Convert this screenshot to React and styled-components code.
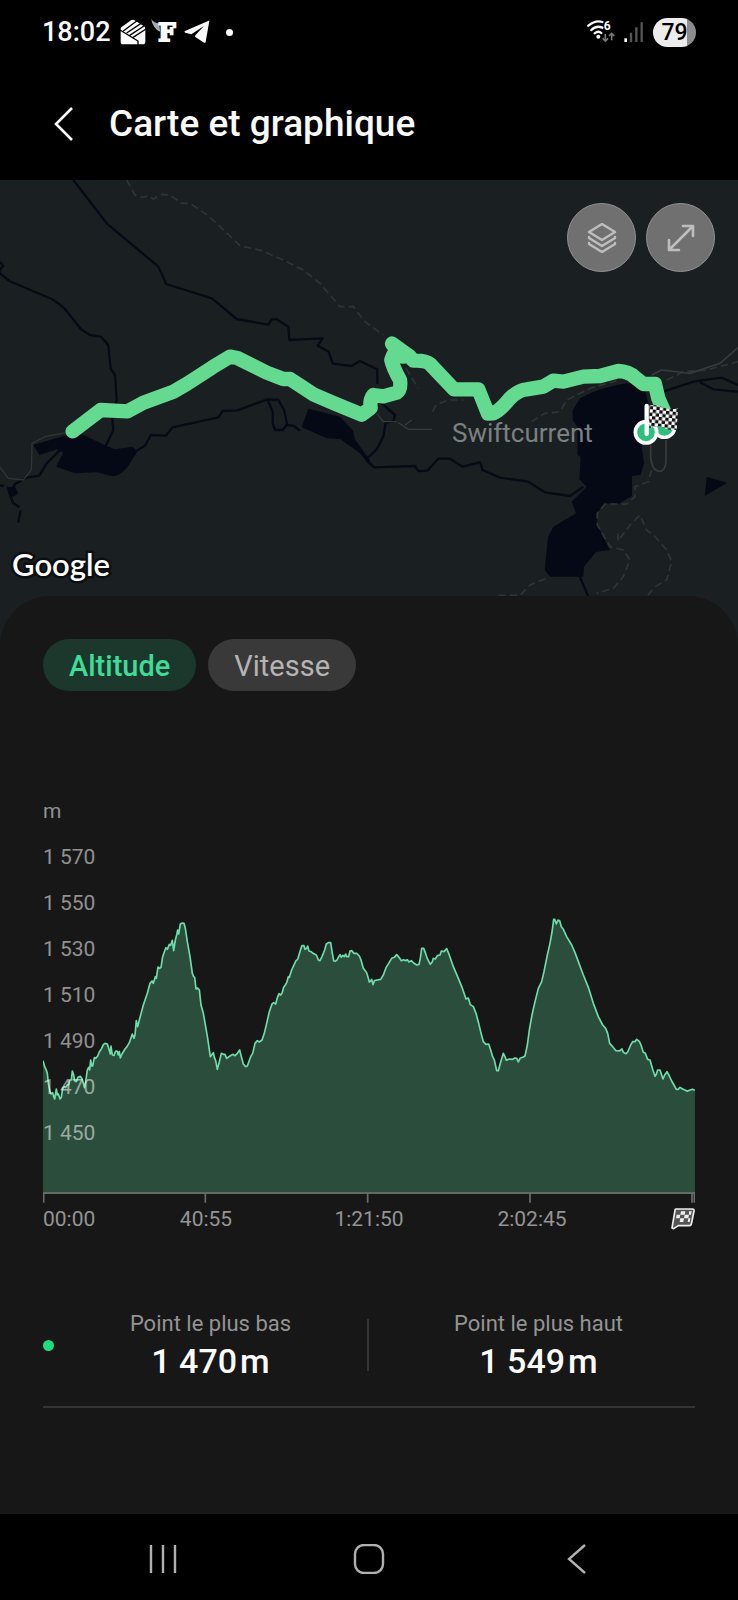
import React, { useState } from 'react';
import styled, { createGlobalStyle } from 'styled-components';

const GlobalStyle = createGlobalStyle`
  * {
    box-sizing: border-box;
  }

  body {
    margin: 0;
    background: #000;
    font-family: Roboto, "Liberation Sans", sans-serif;
  }

  button {
    font: inherit;
    border: 0;
    padding: 0;
    cursor: pointer;
  }

  svg {
    display: block;
  }
`;

const Screen = styled.div`
  display: flex;
  flex-direction: column;
  min-height: 100vh;
  background: #000;
  color: #fafafa;
`;

const StatusBar = styled.div`
  display: flex;
  align-items: center;
  justify-content: space-between;
  height: 64px;
  padding: 0 42px;
`;

const StatusGroup = styled.div`
  display: flex;
  align-items: center;
  gap: ${({ $gap }) => $gap}px;
`;

const Clock = styled.span`
  font-size: 27px;
  font-weight: 500;
  margin-right: 4px;
`;

const Dot = styled.span`
  width: ${({ $size }) => $size}px;
  height: ${({ $size }) => $size}px;
  border-radius: 50%;
  background: ${({ $color }) => $color};
`;

const MoreDot = styled(Dot)`
  margin-left: 11px;
`;

const Battery = styled.span`
  width: 43px;
  height: 29px;
  border-radius: 15px;
  background: linear-gradient(to right, #ececec 79%, #8c8c8c 79%);
  color: #000;
  font-size: 23px;
  font-weight: 500;
  line-height: 29px;
  text-align: center;
`;

const Header = styled.header`
  display: flex;
  align-items: center;
  gap: 36px;
  height: 116px;
  padding: 3px 54px 0;
`;

const IconButton = styled.button`
  display: flex;
  align-items: center;
  justify-content: center;
  background: none;
  color: ${({ $color }) => $color || '#fafafa'};
`;

const Title = styled.h1`
  margin: 0;
  font-size: 37px;
  line-height: 48px;
  font-weight: 500;
`;

const MapArea = styled.div`
  position: relative;
  height: 466px;
  background: #1a2022;
`;

const MapDrawing = styled.svg`
  width: 100%;
  height: 100%;
`;

const MapControls = styled.div`
  position: absolute;
  top: 23px;
  right: 23px;
  display: flex;
  gap: 10px;
`;

const RoundButton = styled.button`
  display: flex;
  align-items: center;
  justify-content: center;
  width: 69px;
  height: 69px;
  border: 1px solid #929292;
  border-radius: 50%;
  background: #707070;
  color: #bebebe;
`;

const MapBrand = styled.span`
  position: absolute;
  left: 12px;
  bottom: 63px;
  font-family: Lato, sans-serif;
  font-size: 31px;
  line-height: 38px;
  font-weight: 600;
  color: #fff;
  -webkit-text-stroke: 5px #0c0f10;
  paint-order: stroke fill;
`;

const Sheet = styled.main`
  position: relative;
  flex: 1;
  margin-top: -50px;
  padding: 43px 43px 0;
  border-radius: 50px 50px 0 0;
  background: #171717;
`;

const Chips = styled.div`
  display: flex;
  gap: 12px;
`;

const Chip = styled.button`
  height: 52px;
  padding: 2px 26px 0;
  border-radius: 26px;
  font-size: 29px;
  font-weight: ${({ $active }) => ($active ? 500 : 400)};
  background: ${({ $active }) => ($active ? '#1c372b' : '#393939')};
  color: ${({ $active }) => ($active ? '#3ddc97' : '#b4b4b4')};
`;

const Chart = styled.section`
  display: grid;
  margin-top: 97px;
  font-size: 21px;
  color: #949494;
`;

const Plot = styled.svg`
  grid-area: 1 / 1;
  align-self: end;
  width: 100%;
  height: 303px;
`;

const YLabels = styled.div`
  grid-area: 1 / 1;
  display: flex;
  flex-direction: column;
  height: 415px;
  line-height: 46px;
  color: rgba(255, 255, 255, 0.53);
  z-index: 1;
`;

const XLabels = styled.div`
  display: grid;
  grid-template-columns: 1fr 2fr 2fr 2fr 1fr;
  align-items: center;
  line-height: 32px;
  text-align: center;

  & > :first-child {
    text-align: left;
  }

  & > :last-child {
    justify-self: end;
  }
`;

const Stats = styled.section`
  display: flex;
  align-items: center;
  margin-top: 71px;
  padding-bottom: 22px;
  border-bottom: 2px solid #343434;
`;

const Stat = styled.div`
  flex: 1;
  padding-top: 4px;
  text-align: center;
`;

const StatLabel = styled.div`
  font-size: 22px;
  line-height: 28px;
  color: #949494;
`;

const StatValue = styled.div`
  display: flex;
  justify-content: center;
  gap: 3px;
  font-size: 34px;
  line-height: 46px;
  font-weight: 500;
`;

const Divider = styled.span`
  width: 2px;
  height: 52px;
  margin-right: 13px;
  background: #343434;
`;

const NavBar = styled.nav`
  display: flex;
  align-items: center;
  justify-content: space-between;
  height: 86px;
  padding: 4px 143px 0;
`;

const elevation = [
  [0, 482], [5, 500], [9, 508], [13, 520], [16, 550], [21, 575], [24, 582], [29, 578], [32, 590], [35, 597],
  [40, 567], [43, 585], [46, 582], [51, 597], [55, 592], [59, 565], [64, 560], [68, 563], [72, 555], [77, 554],
  [81, 540], [85, 540], [88, 513], [92, 525], [95, 542], [100, 545], [105, 532], [112, 529], [117, 536], [121, 550],
  [124, 563], [128, 545], [133, 510], [137, 502], [140, 510], [143, 480], [146, 498], [149, 498], [154, 473], [158, 475],
  [164, 468], [169, 456], [176, 445], [181, 434], [186, 430], [193, 432], [198, 448], [202, 462], [204, 438], [208, 465],
  [213, 466], [218, 453], [223, 454], [226, 465], [229, 455], [232, 474], [237, 462], [246, 447], [252, 440], [259, 428],
  [268, 402], [273, 415], [276, 405], [280, 362], [284, 380], [289, 360], [301, 315], [313, 280], [321, 250], [327, 243],
  [331, 250], [337, 230], [340, 235], [345, 201], [350, 205], [354, 202], [359, 170], [366, 150], [369, 143], [373, 148],
  [379, 133], [383, 136], [388, 121], [392, 152], [397, 120], [401, 105], [404, 90], [407, 102], [412, 72], [418, 69],
  [423, 70], [427, 85], [433, 125], [441, 170], [448, 220], [452, 230], [455, 232], [459, 267], [464, 264], [469, 270],
  [474, 315], [481, 340], [488, 380], [494, 415], [502, 470], [511, 458], [514, 472], [518, 482], [523, 508], [529, 485],
  [535, 460], [541, 463], [546, 463], [551, 475], [561, 468], [569, 463], [576, 467], [583, 460], [590, 450], [595, 470],
  [601, 492], [608, 500], [613, 498], [623, 470], [629, 460], [636, 430], [643, 422], [649, 426], [657, 420], [664, 400],
  [671, 370], [679, 335], [687, 312], [692, 308], [698, 312], [703, 293], [708, 281], [713, 285], [717, 280], [722, 262],
  [727, 255], [731, 248], [736, 230], [739, 232], [746, 210], [759, 182], [764, 178], [774, 145], [777, 137], [783, 137],
  [786, 148], [791, 145], [794, 138], [798, 153], [804, 155], [810, 160], [820, 165], [826, 180], [831, 182], [837, 170],
  [845, 150], [850, 132], [856, 128], [863, 128], [868, 160], [872, 182], [876, 184], [882, 180], [887, 170], [891, 164],
  [895, 172], [900, 166], [904, 170], [908, 162], [911, 170], [917, 170], [921, 153], [926, 152], [933, 160], [941, 160],
  [949, 168], [954, 180], [961, 205], [971, 218], [976, 235], [979, 246], [983, 243], [986, 238], [990, 254], [994, 242],
  [1003, 240], [1013, 238], [1021, 225], [1029, 203], [1037, 190], [1046, 175], [1054, 172], [1061, 164], [1068, 172],
  [1075, 182], [1082, 179], [1088, 182], [1093, 179], [1098, 186], [1105, 182], [1112, 189], [1121, 195], [1128, 193],
  [1132, 175], [1136, 145], [1142, 145], [1147, 158], [1153, 176], [1162, 193], [1168, 185], [1171, 175], [1177, 177],
  [1183, 167], [1191, 165], [1195, 153], [1203, 155], [1211, 146], [1217, 160], [1231, 200], [1246, 235], [1257, 262],
  [1269, 297], [1276, 294], [1282, 314], [1291, 320], [1299, 340], [1307, 370], [1313, 395], [1321, 425], [1329, 433],
  [1337, 432], [1343, 450], [1349, 470], [1354, 480], [1361, 512], [1366, 512], [1372, 490], [1381, 460], [1386, 470],
  [1390, 481], [1399, 477], [1409, 478], [1415, 474], [1421, 475], [1426, 486], [1431, 475], [1441, 471], [1446, 468],
  [1453, 435], [1459, 390], [1467, 345], [1476, 305], [1486, 265], [1496, 245], [1503, 215], [1513, 165], [1521, 130],
  [1528, 90], [1532, 58], [1535, 58], [1540, 72], [1545, 60], [1550, 62], [1555, 80], [1561, 88], [1571, 110],
  [1586, 135], [1596, 158], [1608, 190], [1621, 225], [1636, 262], [1651, 310], [1666, 350], [1679, 375], [1688, 385],
  [1694, 400], [1700, 430], [1709, 440], [1719, 452], [1729, 453], [1737, 447], [1741, 457], [1749, 461], [1754, 456],
  [1763, 435], [1769, 425], [1776, 425], [1781, 418], [1789, 424], [1794, 435], [1801, 457], [1807, 460], [1814, 478],
  [1821, 480], [1829, 508], [1836, 529], [1840, 523], [1844, 510], [1851, 510], [1856, 525], [1860, 537], [1865, 525],
  [1872, 515], [1879, 528], [1886, 543], [1893, 555], [1900, 568], [1906, 568], [1911, 562], [1919, 567], [1926, 570],
  [1933, 574], [1941, 570], [1949, 568], [1956, 571],
];

const yTicks = ['m', '1 570', '1 550', '1 530', '1 510', '1 490', '1 470', '1 450'];
const xTicks = ['00:00', '40:55', '1:21:50', '2:02:45'];

const TrailMap = () => (
  <MapDrawing viewBox="0 0 2214 1398" preserveAspectRatio="xMidYMin slice" role="img" aria-label="Carte du parcours">
    <defs>
      <pattern id="checks" width="20" height="20" patternUnits="userSpaceOnUse" patternTransform="rotate(6)">
        <rect width="20" height="20" fill="#fff" />
        <path d="M0 0h10v10H0zM10 10h10v10H10z" fill="#111" />
      </pattern>
    </defs>

    {/* rivers */}
    <g fill="none" stroke="#050a16" strokeWidth="7" strokeLinejoin="round">
      <path d="M220 0L320 130L475 260Q488 285 498 312L636 355L710 417L805 434L815 418L830 418L865 440L868 480L968 475L953 497L986 515L998 551L1055 558L1080 543L1132 568V612" />
      <path d="M0 245L10 258L0 268V280L28 303L155 357Q190 378 205 400L243 448L270 465L303 470L325 496L332 566L345 585L350 660L337 715L340 750L316 800" />
      <path d="M405 815L435 797L453 765L497 767L518 742L655 712L668 693L712 691L802 658L835 660L852 690L862 735L882 738L900 752" />
      <path d="M802 658L818 695V730L825 750H848L860 735" />
      <path d="M1060 790L1110 850L1122 862L1245 858L1255 873L1282 872L1315 836H1350L1388 860L1440 847L1448 870L1500 893L1585 905L1635 937L1710 948L1750 920" />
      <path d="M1145 670L1185 705L1180 725L1157 728L1150 770L1130 808L1102 835" />
      <path d="M180 810L140 850L118 887L80 893L45 912L30 945L40 970L58 982M62 992L54 1028M0 916L12 918" />
      <path d="M1990 635L2080 605L2165 593L2214 615M2100 607L2140 628L2214 635" />
      <path d="M1735 1180L1765 1250L1775 1262" />
    </g>

    {/* lakes */}
    <g fill="#050916">
      <path d="M100 795L200 765L240 760L320 798L345 808L398 800L412 815L380 865Q355 892 335 888L290 877L225 880L168 860L190 818L170 808L118 825Z" />
      <path d="M925 686L1020 710L1058 750L1066 780L1110 840L1108 856L1080 820L1020 777L980 775L905 742Z" />
      <path d="M20 920L46 922L55 940L40 950L26 945Z" />
      <path d="M1740 655Q1800 620 1890 608L1935 630L1950 690L1925 800L1932 850L1922 885L1896 888V948L1855 972L1815 970L1790 1000L1792 1035L1830 1110L1788 1116L1752 1160L1750 1190L1650 1190L1634 1170L1644 1070L1660 1040L1728 1000L1715 965L1760 920L1738 898L1742 830L1732 825V740L1718 720V690Z" />
      <path d="M2120 890L2182 908L2114 948Z" />
    </g>

    {/* roads and footpaths */}
    <g fill="none" stroke="#2e3636" strokeWidth="5" strokeDasharray="22 12">
      <path d="M380 0L405 45L425 52L445 48L460 57L485 43L510 45L545 70L570 70L615 100L650 130L720 197L785 212L845 238L910 270L960 310L1020 380L1060 380L1095 425L1150 465" />
      <path d="M215 755L135 770L96 790L94 870L70 900L25 895L0 862" strokeDasharray="none" strokeWidth="4" />
      <path d="M1218 565L1255 625" />
      <path d="M1595 725L1635 700L1680 695L1700 660L1770 625L1850 602" />
      <path d="M1298 695L1308 675L1345 660H1390" />
      <path d="M1955 870L1945 905L1905 920V950L1880 972L1815 972L1792 1000L1792 1035L1830 1100L1870 1110L1890 1140L1870 1190L1840 1225L1790 1240" />
      <path d="M1853 1060L1855 1090M1860 1075L1890 1035L1920 1005L1940 1050L1965 1070L2000 1110L2015 1145L2000 1200L1965 1220L1940 1250" />
      <path d="M1495 1246H1560L1590 1215L1640 1195" />
      <path d="M2000 600L2050 575L2120 570L2214 545" />
    </g>
    <g fill="none" stroke="#353c3b" strokeWidth="5">
      <path d="M1130 700L1150 725H1190M1195 728L1225 748H1296M1215 735L1235 720" strokeWidth="4" />
      <path d="M1955 585L1985 570L2070 580L2160 550L2214 503" />
      <path d="M1952 785V830Q1955 872 1978 874Q2000 872 1998 830V780" />
    </g>

    <path
      d="M218 754L302 690L383 694L430 668L520 635L560 612L640 560L690 530L712 534L800 578L850 597L870 597L940 643L1010 673L1085 704L1112 684Q1108 660 1120 645L1150 649L1190 638Q1204 628 1200 600Q1180 565 1174 540L1180 525L1210 530L1176 491L1228 528L1240 542Q1275 540 1290 552L1362 628L1435 628L1464 701L1480 700Q1500 692 1530 655Q1555 630 1580 628L1630 620L1660 602L1690 605L1750 590L1800 588L1855 573Q1885 574 1905 592L1930 612L1965 612L1975 655L1995 700"
      fill="none"
      stroke="#64da90"
      strokeWidth="43"
      strokeLinecap="round"
      strokeLinejoin="round"
    />

    <text x="1356" y="787" fontFamily="Roboto, sans-serif" fontSize="78" fill="#7c8080">Swiftcurrent</text>

    {/* start and finish markers */}
    <circle cx="1993" cy="740" r="32" fill="#2fbf7d" stroke="#fff" strokeWidth="10" />
    <circle cx="1938" cy="757" r="32" fill="#2fbf7d" stroke="#fff" strokeWidth="11" />
    <path d="M1948 676Q1968 672 1988 682T2034 685L2030 750Q2008 752 1990 743T1948 744Z" fill="url(#checks)" />
    <path d="M1940 678V762" stroke="#fff" strokeWidth="13" strokeLinecap="round" />
  </MapDrawing>
);

const ElevationPlot = () => {
  const line = elevation.map(([x, y]) => `${x},${y}`).join(' ');

  return (
    <Plot viewBox="0 0 1956 909" preserveAspectRatio="none" role="img" aria-label="Altitude">
      <polygon points={`0,880 ${line} 1956,880`} fill="#2b4d3b" />
      <polyline points={line} fill="none" stroke="#6fdca9" strokeWidth="5" strokeLinejoin="round" />
      <path d="M0 879H1956" stroke="#5d6d64" strokeWidth="6" />
      <path d="M2 880V908M487 880V908M974 880V908M1461 880V908M1947 880V908M1954 880V908" stroke="#6c6c6c" strokeWidth="5" />
    </Plot>
  );
};

const App = () => {
  const [mode, setMode] = useState('Altitude');

  return (
    <Screen>
      <GlobalStyle />
      <StatusBar>
        <StatusGroup $gap={5}>
          <Clock>18:02</Clock>
          <svg width="26" height="26" viewBox="0 0 78 78">
            <path d="M4 25L34 3Q40 0 46 5L72 22Q76 25 76 30V68Q76 76 68 76H10Q2 76 2 68V30Q2 27 4 25Z" fill="#fafafa" />
            <path d="M0 33L54 66V78M38 56L78 30M10 36L50 6M20 42L62 14M29 49L72 21" fill="none" stroke="#000" strokeWidth="4" />
          </svg>
          <svg width="28" height="38" viewBox="0 -18 84 114">
            <path d="M1 0Q8 12 24 13L28 38Q18 36 10 24Q2 14 1 0Z" fill="#aaa" />
            <text x="22" y="67" fontFamily="DejaVu Serif, serif" fontWeight="700" fontSize="73" fill="#fafafa" stroke="#fafafa" strokeWidth="6">F</text>
          </svg>
          <svg width="26" height="24" viewBox="0 0 78 72">
            <path d="M76 3Q77 1 74 2L3 33Q-1 36 4 38L22 43L60 18L34 46L33 50L60 68Q64 70 65 65Z" fill="#fafafa" />
          </svg>
          <MoreDot $size={7} $color="#fafafa" />
        </StatusGroup>
        <StatusGroup $gap={9}>
          <svg width="28" height="26" viewBox="0 0 84 78">
            <g fill="none" stroke="#fafafa" strokeWidth="7" strokeLinecap="round">
              <path d="M4 20Q26 2 46 9M13 33Q28 18 46 26M23 43Q34 34 43 42" />
            </g>
            <circle cx="34" cy="53" r="6" fill="#fafafa" />
            <text x="50" y="34" fontFamily="Roboto, sans-serif" fontSize="36" fontWeight="700" fill="#fafafa">6</text>
            <path d="M55 45V66M47 58L55 66L63 58M74 64V43M66 51L74 43L82 51" fill="none" stroke="#777" strokeWidth="5" />
          </svg>
          <svg width="20" height="22" viewBox="0 0 60 66">
            <path d="M5 52V63" stroke="#fafafa" strokeWidth="8" />
            <path d="M21 35V63M37 19V63M53 4V63" stroke="#555" strokeWidth="7" />
          </svg>
          <Battery>79</Battery>
        </StatusGroup>
      </StatusBar>

      <Header>
        <IconButton aria-label="Retour">
          <svg width="19" height="34" viewBox="0 0 19 34" fill="none" stroke="currentColor" strokeWidth="2.6">
            <path d="M18 1L2 17L18 33" />
          </svg>
        </IconButton>
        <Title>Carte et graphique</Title>
      </Header>

      <MapArea>
        <TrailMap />
        <MapBrand>Google</MapBrand>
        <MapControls>
          <RoundButton aria-label="Calques">
            <svg width="30" height="30" viewBox="0 0 30 30" fill="none" stroke="currentColor" strokeWidth="2.4" strokeLinejoin="round" strokeLinecap="round">
              <path d="M15 1L28 9L15 17L2 9Z" />
              <path d="M2 14V15L15 23L28 15V14M2 20V21L15 29L28 21V20" />
            </svg>
          </RoundButton>
          <RoundButton aria-label="Agrandir">
            <svg width="28" height="28" viewBox="0 0 28 28" fill="none" stroke="currentColor" strokeWidth="2.6" strokeLinejoin="round" strokeLinecap="round">
              <path d="M2 26L26 2M16 2H26V12M2 16V26H12" />
            </svg>
          </RoundButton>
        </MapControls>
      </MapArea>

      <Sheet>
        <Chips>
          {['Altitude', 'Vitesse'].map((name) => (
            <Chip key={name} $active={mode === name} onClick={() => setMode(name)}>{name}</Chip>
          ))}
        </Chips>

        <Chart>
          <YLabels>
            {yTicks.map((tick) => <span key={tick}>{tick}</span>)}
          </YLabels>
          <ElevationPlot />
          <XLabels>
            {xTicks.map((tick) => <span key={tick}>{tick}</span>)}
            <svg width="24" height="22" viewBox="0 0 72 66">
              <path d="M14 3H64Q70 3 69 9L61 48Q60 53 55 53H22L8 62L3 60L12 7Q12 3 14 3Z" fill="#555" stroke="#eee" strokeWidth="5" strokeLinejoin="round" />
              <path d="M30 10H43L41 20H28ZM17 20H28L26 31H15ZM41 20H54L52 31H39ZM28 31H39L37 42H26ZM54 10H62L60 20H54ZM52 31H58L56 42H50Z" fill="#eee" />
            </svg>
          </XLabels>
        </Chart>

        <Stats>
          <Dot $size={11} $color="#1ddb80" />
          <Stat>
            <StatLabel>Point le plus bas</StatLabel>
            <StatValue><span>1 470</span><span>m</span></StatValue>
          </Stat>
          <Divider />
          <Stat>
            <StatLabel>Point le plus haut</StatLabel>
            <StatValue><span>1 549</span><span>m</span></StatValue>
          </Stat>
        </Stats>
      </Sheet>

      <NavBar>
        <IconButton $color="#b0b0b0" aria-label="Applications récentes">
          <svg width="40" height="30" viewBox="0 0 40 30" fill="none" stroke="currentColor" strokeWidth="2.4">
            <path d="M8 1V29M20 1V29M32 1V29" />
          </svg>
        </IconButton>
        <IconButton $color="#b0b0b0" aria-label="Accueil">
          <svg width="40" height="30" viewBox="0 0 40 30" fill="none" stroke="currentColor" strokeWidth="2.4">
            <rect x="6" y="1" width="28" height="28" rx="9" />
          </svg>
        </IconButton>
        <IconButton $color="#b0b0b0" aria-label="Précédent">
          <svg width="40" height="30" viewBox="0 0 40 30" fill="none" stroke="currentColor" strokeWidth="2.4">
            <path d="M30 1L14 15L30 29" />
          </svg>
        </IconButton>
      </NavBar>
    </Screen>
  );
};

export default App;
